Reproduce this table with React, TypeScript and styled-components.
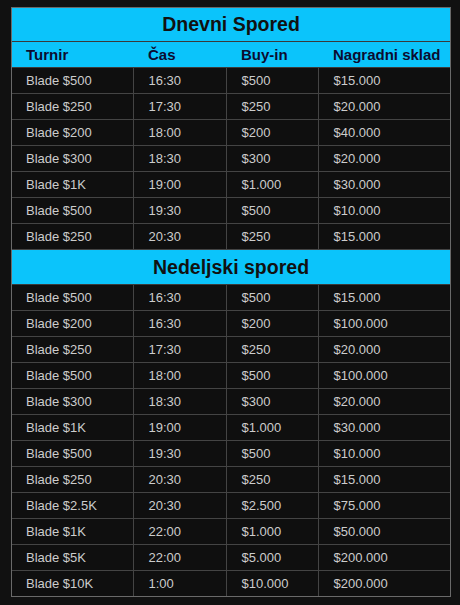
import React from 'react';
import styled, { createGlobalStyle } from 'styled-components';

const GlobalStyle = createGlobalStyle`
  html, body {
    margin: 0;
    padding: 0;
    background: #111111;
  }
  body {
    font-family: "Liberation Sans", Arial, sans-serif;
  }
`;

type Row = [string, string, string, string];

const daily: Row[] = [
  ['Blade $500', '16:30', '$500', '$15.000'],
  ['Blade $250', '17:30', '$250', '$20.000'],
  ['Blade $200', '18:00', '$200', '$40.000'],
  ['Blade $300', '18:30', '$300', '$20.000'],
  ['Blade $1K', '19:00', '$1.000', '$30.000'],
  ['Blade $500', '19:30', '$500', '$10.000'],
  ['Blade $250', '20:30', '$250', '$15.000'],
];

const weekly: Row[] = [
  ['Blade $500', '16:30', '$500', '$15.000'],
  ['Blade $200', '16:30', '$200', '$100.000'],
  ['Blade $250', '17:30', '$250', '$20.000'],
  ['Blade $500', '18:00', '$500', '$100.000'],
  ['Blade $300', '18:30', '$300', '$20.000'],
  ['Blade $1K', '19:00', '$1.000', '$30.000'],
  ['Blade $500', '19:30', '$500', '$10.000'],
  ['Blade $250', '20:30', '$250', '$15.000'],
  ['Blade $2.5K', '20:30', '$2.500', '$75.000'],
  ['Blade $1K', '22:00', '$1.000', '$50.000'],
  ['Blade $5K', '22:00', '$5.000', '$200.000'],
  ['Blade $10K', '1:00', '$10.000', '$200.000'],
];

const App: React.FC = () => {
  return (
    <Page>
      <GlobalStyle />
      <Frame>
        <Schedule>
          <colgroup>
            <col style={{ width: 121 }} />
            <col style={{ width: 93 }} />
            <col style={{ width: 92 }} />
            <col style={{ width: 132 }} />
          </colgroup>
          <tbody>
            <tr>
              <TitleCell colSpan={4} $h={33}>Dnevni Spored</TitleCell>
            </tr>
            <tr>
              <HeadCell>Turnir</HeadCell>
              <HeadCell>Čas</HeadCell>
              <HeadCell>Buy-in</HeadCell>
              <HeadCell>Nagradni sklad</HeadCell>
            </tr>
            {daily.map((r, i) => (
              <tr key={'d' + i}>
                {r.map((c, j) => (
                  <Cell key={j}>{c}</Cell>
                ))}
              </tr>
            ))}
            <tr>
              <TitleCell colSpan={4} $h={34}>Nedeljski spored</TitleCell>
            </tr>
            {weekly.map((r, i) => (
              <tr key={'w' + i}>
                {r.map((c, j) => (
                  <Cell key={j}>{c}</Cell>
                ))}
              </tr>
            ))}
          </tbody>
        </Schedule>
      </Frame>
    </Page>
  );
};

export default App;

const Page = styled.div`
  padding: 7px 9px 8px 11px;
`;

const Frame = styled.div`
  width: 438px;
  border: 1px solid #6a6a6a;
`;

const Schedule = styled.table`
  width: 100%;
  table-layout: fixed;
  border-collapse: collapse;
  border-style: hidden;
  background: #0f0f0f;
`;

const TitleCell = styled.td<{ $h: number }>`
  height: ${(p) => p.$h}px;
  padding: 0;
  background: #0bc4fb;
  color: #111111;
  font-size: 19.5px;
  font-weight: bold;
  text-align: center;
  border: 1px solid #3a3a3a;
`;

const HeadCell = styled.td`
  height: 25px;
  padding: 0 0 0 15px;
  background: #0bc4fb;
  color: #0c0c30;
  font-size: 15px;
  font-weight: bold;
  text-align: left;
  border-bottom: 1px solid #3a3a3a;

  &:first-child {
    padding-left: 14px;
  }
`;

const Cell = styled.td`
  height: 25px;
  padding: 0 0 0 15px;
  color: #cccccc;
  font-size: 13px;
  border: 1px solid #444444;
  white-space: nowrap;

  &:first-child {
    padding-left: 14px;
  }
`;
